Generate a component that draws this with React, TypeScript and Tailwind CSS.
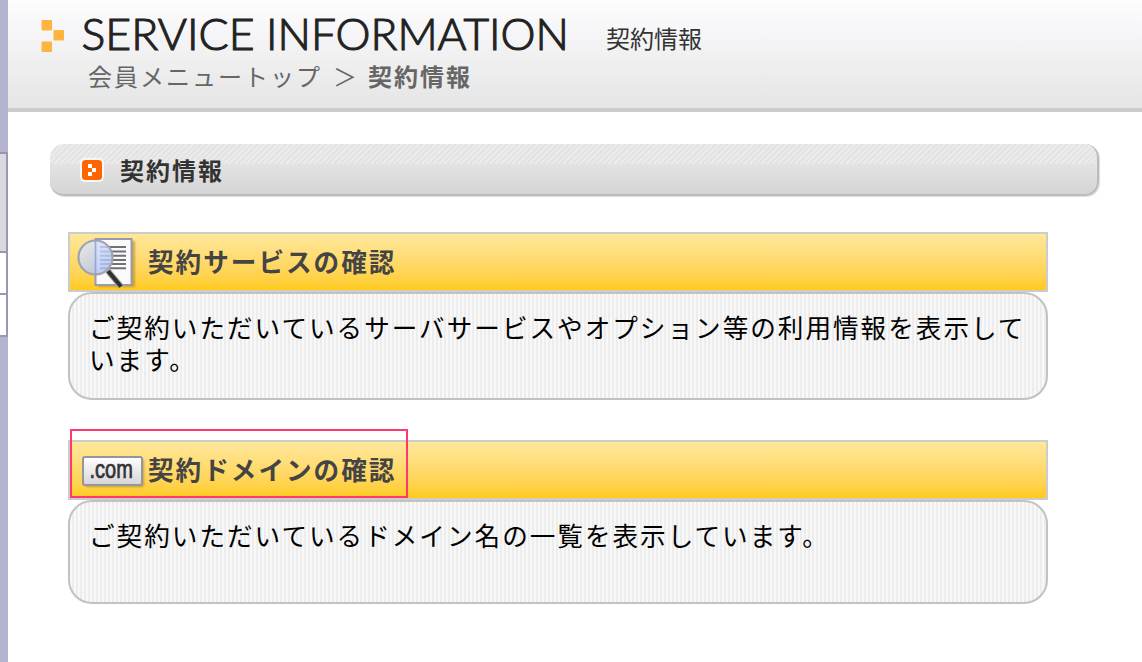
import type { ReactNode } from 'react';

function Dots() {
  return (
    <svg className="mt-5 h-8 w-[23px] shrink-0" viewBox="0 0 23 32" fill="#ffb441">
      <rect x="0.5" y="0" width="10.5" height="10.5" rx="1" />
      <rect x="12.5" y="10" width="10.5" height="10.5" rx="1" />
      <rect x="0.5" y="21.5" width="10.5" height="10.5" rx="1" />
    </svg>
  );
}

function SectionIcon() {
  return (
    <svg className="mt-px h-6 w-6 shrink-0" viewBox="0 0 24 24">
      <rect width="24" height="24" rx="5" fill="#f8f8f8" />
      <rect x="2" y="2" width="20" height="20" rx="3.5" fill="#ff6600" />
      <path fill="#fff" d="M8 6h4v4H8zM12 10h4v4h-4zM8 14h4v4H8z" />
    </svg>
  );
}

function DocumentIcon() {
  return (
    <svg className="h-14 w-[70px] shrink-0 overflow-visible" viewBox="0 0 70 56">
      <defs>
        <linearGradient id="lens" x1="0" y1="0" x2="0.7" y2="1">
          <stop offset="0" stopColor="#e4edff" />
          <stop offset="1" stopColor="#acc1f4" />
        </linearGradient>
        <filter id="soft"><feGaussianBlur stdDeviation="1.2" /></filter>
      </defs>
      <path d="M28 7H65V53H28z" fill="#a9822d" opacity=".6" filter="url(#soft)" />
      <path d="M25.5 5H61.500V51H25.500z" fill="#fafafa" stroke="#999baa" strokeWidth="2" />
      <path d="M30 13H56M30 17.500H56M30 21.700H56M30 25.900H56M30 30.100H56M30 34.300H56" stroke="#70707a" strokeWidth="2" />
      <circle cx="25.500" cy="23.500" r="17" fill="url(#lens)" fillOpacity=".8" stroke="#a0a4ae" strokeWidth="2.200" />
      <path d="M25.500 7V40" stroke="#8492c4" strokeWidth="1.500" opacity=".6" />
      <path d="M38 37L51 52.500" stroke="#a3a5a7" strokeWidth="6" />
      <path d="M38 37L51 52.500" stroke="#303030" strokeWidth="4" />
    </svg>
  );
}

function DomainIcon() {
  return (
    <svg className="h-14 w-[76px] shrink-0 overflow-visible" viewBox="0 0 76 56">
      <defs>
        <linearGradient id="plate" x1="0" y1="0" x2="0" y2="1">
          <stop stopColor="#fff" />
          <stop offset="1" stopColor="#d5d5d9" />
        </linearGradient>
        <filter id="plateShadow"><feGaussianBlur stdDeviation="1.2" /></filter>
      </defs>
      <rect x="15" y="17" width="59" height="28" rx="2" fill="#a8842c" opacity=".65" filter="url(#plateShadow)" />
      <rect x="13" y="15" width="59" height="28" rx="2" fill="url(#plate)" stroke="#94969e" strokeWidth="2" />
      <g transform="translate(19.500 35.500) scale(.8 1)">
        <text className="font-['Liberation_Sans',sans-serif] text-[25px] font-normal tracking-[0px]" fill="#333" stroke="#333" strokeWidth=".7">.com</text>
      </g>
    </svg>
  );
}

function ServiceCard({ title, icon, children, bodyClass }: { title: string; icon: ReactNode; children: ReactNode; bodyClass: string }) {
  return (
    <article>
      <h3 className="flex h-[60px] border-2 border-[#ccc] bg-linear-to-b from-[#ffe89b] to-[#ffcb17] text-[25.6px] leading-[54px] font-bold tracking-[2px] text-[#444]">
        <span className="flex w-[78px] shrink-0">{icon}</span>
        {title}
      </h3>
      <div className={`rounded-[24px] border-[2.5px] border-[#c2c2c2] bg-[repeating-linear-gradient(90deg,#f8f8f8_0px,#f8f8f8_2px,#ededed_2px,#ededed_4px)] pt-[17px] pl-[19px] text-[25.6px] leading-8 tracking-[2px] text-black ${bodyClass}`}>
        {children}
      </div>
    </article>
  );
}

export default function App() {
  return (
    <div className="flex h-[662px] w-[1142px] overflow-hidden bg-white font-['Noto_Sans_CJK_JP',sans-serif]">
      <aside className="h-full w-2 shrink-0 bg-[#b4b4ce] pt-[152px]">
        <div className="h-[101px] border-y-2 border-r-2 border-t-[#9695b5] border-r-[#9997b8] border-b-[#9695b5] bg-[#dcd9dc]" />
        <div className="h-[42px] border-r-2 border-b-2 border-[#9997b8] bg-white" />
        <div className="h-[42px] border-r-2 border-b-2 border-[#9997b8] bg-white" />
      </aside>
      <main className="min-w-0 flex-1">
        <header className="h-28 border-b-4 border-[#cbcbcb] bg-[linear-gradient(#fdfdfc_0px,#f8f8fa_22px,#e5e5e5_108px)] pl-[33px]">
          <div className="flex h-[60px]">
            <Dots />
            <h1 className="ml-4 w-[494px] shrink-0">
              <svg className="block h-[60px] w-full overflow-visible" viewBox="0 0 494 60" fontFamily="Lato, sans-serif" fontWeight="300" fontSize="44" fill="#222" stroke="#222" strokeWidth="1.1">
                <text x="1.500" y="50" textLength="173" lengthAdjust="spacingAndGlyphs">SERVICE</text>
                <text x="186" y="50" textLength="303" lengthAdjust="spacingAndGlyphs">INFORMATION</text>
              </svg>
            </h1>
            <span className="ml-[32px] pt-[22px] text-2xl leading-8 text-[#333]">契約情報</span>
          </div>
          <nav className="flex h-8 pl-[47px] text-2xl leading-8 tracking-[2px] whitespace-pre text-[#666]">
            <span>会員メニュートップ</span>
            <span className="w-[46px] pl-[11px]">＞</span>
            <strong>契約情報</strong>
          </nav>
        </header>
        <section className="px-[42px] pt-8">
          <h2 className="flex h-[52px] w-[1049px] items-center gap-4 rounded-[14px] border-r-2 border-b-2 border-[#bbb] bg-[linear-gradient(transparent_0px,transparent_20px,#e3e3e3_20px,#d5d5d5_50px),repeating-linear-gradient(135deg,#ebebeb_0px,#ebebeb_2px,#e3e3e3_2px,#e3e3e3_4px)] pl-[30px] text-2xl font-bold tracking-[2px] text-[#333] shadow-[1px_1px_1px_#ddd]">
            <SectionIcon />
            <span className="pt-px">契約情報</span>
          </h2>
          <div className="mt-9 ml-[18px] flex w-[980px] flex-col gap-10">
            <ServiceCard title="契約サービスの確認" icon={<DocumentIcon />} bodyClass="h-[108px]">
              ご契約いただいているサーバサービスやオプション等の利用情報を表示して<br />います。
            </ServiceCard>
            <div className="relative">
              <ServiceCard title="契約ドメインの確認" icon={<DomainIcon />} bodyClass="h-[104px]">
                ご契約いただいているドメイン名の一覧を表示しています。
              </ServiceCard>
              <div className="pointer-events-none absolute -top-[11px] left-0.5 h-[69px] w-[338px] border-2 border-[#ff3870]" />
            </div>
          </div>
        </section>
      </main>
    </div>
  );
}
